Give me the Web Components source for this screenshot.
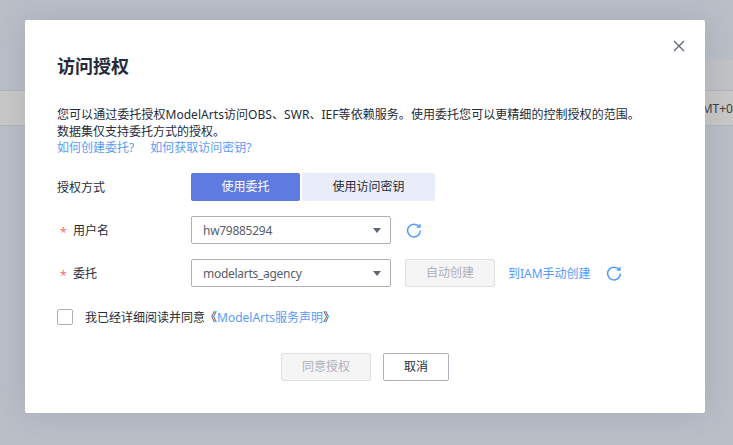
<!DOCTYPE html>
<html><head><meta charset="utf-8">
<style>
html,body{margin:0;padding:0;width:733px;height:445px;overflow:hidden}
body{font-family:"Noto Sans","Noto Sans CJK SC",sans-serif;font-size:12px;color:#252b3a}
</style></head><body>
<page-backdrop>
  <auth-dialog heading="访问授权">
    <p-desc></p-desc>
    <form-row label="授权方式"><seg-toggle></seg-toggle></form-row>
    <form-row label="用户名" required><select-box value="hw79885294"></select-box><refresh-icon style="margin-left:15px"></refresh-icon></form-row>
    <form-row label="委托" required><select-box value="modelarts_agency"></select-box><ui-button disabled style="margin-left:14px;width:90px">自动创建</ui-button><ui-link style="margin-left:13px">到IAM手动创建</ui-link><refresh-icon style="margin-left:15px"></refresh-icon></form-row>
    <agree-row></agree-row>
    <div slot="footer" style="display:flex;justify-content:center;gap:12px">
      <ui-button disabled style="width:90px">同意授权</ui-button>
      <ui-button style="width:66px">取消</ui-button>
    </div>
  </auth-dialog>
</page-backdrop>
<script>
function def(name,html){
  customElements.define(name,class extends HTMLElement{
    connectedCallback(){
      if(this.shadowRoot)return;
      const r=this.attachShadow({mode:'open'});
      r.innerHTML=typeof html==='function'?html(this):html;
    }
  });
}
const REFRESH='<svg width="16" height="16" viewBox="0 0 16 16" fill="none"><path d="M13.2 4.8A6.4 6.4 0 1 0 14.4 8.4" stroke="#4f9cff" stroke-width="1.5"/><path d="M14.6 1.4V5.8H10.2Z" fill="#4f9cff"/></svg>';
def('refresh-icon','<style>:host{display:inline-flex;width:16px;height:16px}svg{display:block}</style>'+REFRESH);
def('page-backdrop',`<style>
:host{display:flex;flex-direction:column;width:733px;height:445px;background:#babec7;position:relative;overflow:hidden}
.gap{height:60px}
.head{height:30px;background:linear-gradient(90deg,#babec7 0,#babec7 95%,#c1c2c6 95%);}
.band{height:34px;background:#c8c8c8;border-top:1px solid #b2b4b9;border-bottom:1px solid #b2b4b9;display:flex;justify-content:flex-end;align-items:center;overflow:hidden;font-size:12px;color:#3b3e45;white-space:nowrap}
</style><div class="gap"></div><div class="head"></div><div class="band"><span>MT+0</span></div><slot></slot>`);
def('auth-dialog',h=>`<style>
:host{display:flex;flex-direction:column;position:absolute;left:25px;top:20px;width:680px;height:393px;box-sizing:border-box;background:#fff;border-radius:2px;padding:32px 32px 0;box-shadow:0 0 30px rgba(80,85,100,.18)}
h2{margin:0;font-size:18px;line-height:28px;font-weight:700;color:#252b3a}
.x{position:absolute;right:20px;top:20px;width:12px;height:12px}
.body{flex:1;display:flex;flex-direction:column}
.foot{padding-bottom:32px}
</style><svg class="x" viewBox="0 0 12 12"><path d="M1 1L11 11M11 1L1 11" stroke="#5e6675" stroke-width="1.3" fill="none"/></svg>
<h2>${h.getAttribute('heading')}</h2><div class="body"><slot></slot></div><div class="foot"><slot name="footer"></slot></div>`);
def('p-desc',`<style>:host{display:block;margin-top:26px;margin-bottom:17px;font-size:12px;color:#252b3a}div{line-height:17px}div:last-child{line-height:16px}a{color:#5a9cf8;text-decoration:none}a+a{margin-left:16px}</style>
<div style="letter-spacing:.05px">您可以通过委托授权ModelArts访问OBS、SWR、IEF等依赖服务。使用委托您可以更精细的控制授权的范围。</div><div>数据集仅支持委托方式的授权。</div><div><a>如何创建委托?</a><a>如何获取访问密钥?</a></div>`);
def('form-row',h=>`<style>:host{display:flex;align-items:center;height:28px;margin-bottom:15px}
.l{width:134px;box-sizing:border-box;flex:none;display:flex;font-size:12px;color:#252b3a}
.r{display:flex;align-items:center}
.s{color:#f66f6a;width:16px;padding-left:3px;box-sizing:border-box;font-size:12px;transform:translateY(3px)}</style>
<div class="l">${h.hasAttribute('required')?'<span class="s">*</span>':''}${h.getAttribute('label')}</div><div class="r"><slot></slot></div>`);
def('seg-toggle',`<style>:host{display:flex;gap:2px}
div{height:28px;line-height:28px;text-align:center;font-size:12px;border-radius:2px}
.a{width:109px;background:#5e7ce0;color:#fff}.b{width:133px;background:#e9edfa;color:#252b3a}</style><div class="a">使用委托</div><div class="b">使用访问密钥</div>`);
def('select-box',h=>`<style>:host{display:flex;align-items:center;justify-content:space-between;box-sizing:border-box;width:200px;height:28px;border:1px solid #adb0b8;border-radius:2px;padding:0 11px;background:#fff;color:#575d6c;font-size:12px}
span{letter-spacing:-.28px}
i{width:0;height:0;border-left:4px solid transparent;border-right:4px solid transparent;border-top:5px solid #5e6675;margin-right:-2px}</style><span>${h.getAttribute('value')}</span><i></i>`);
def('ui-button',h=>`<style>:host{display:block;box-sizing:border-box;height:28px;line-height:26px;text-align:center;font-size:12px;border-radius:2px;border:1px solid ${h.hasAttribute('disabled')?'#e0e2e6':'#adb0b8'};background:${h.hasAttribute('disabled')?'#f5f5f6':'#fff'};color:${h.hasAttribute('disabled')?'#adb0b8':'#252b3a'}}</style><slot></slot>`);
def('ui-link','<style>:host{color:#4f9cff;font-size:12px}</style><slot></slot>');
def('agree-row',`<style>:host{display:flex;align-items:center;height:16px;margin-top:7px;font-size:12px;color:#252b3a}
i{width:16px;height:16px;box-sizing:border-box;border:1px solid #adb0b8;border-radius:2px;margin-right:12px;flex:none}
a{color:#5a9cf8}</style><i></i><span>我已经详细阅读并同意《<a>ModelArts服务声明</a>》</span>`);
</script>
</body></html>
